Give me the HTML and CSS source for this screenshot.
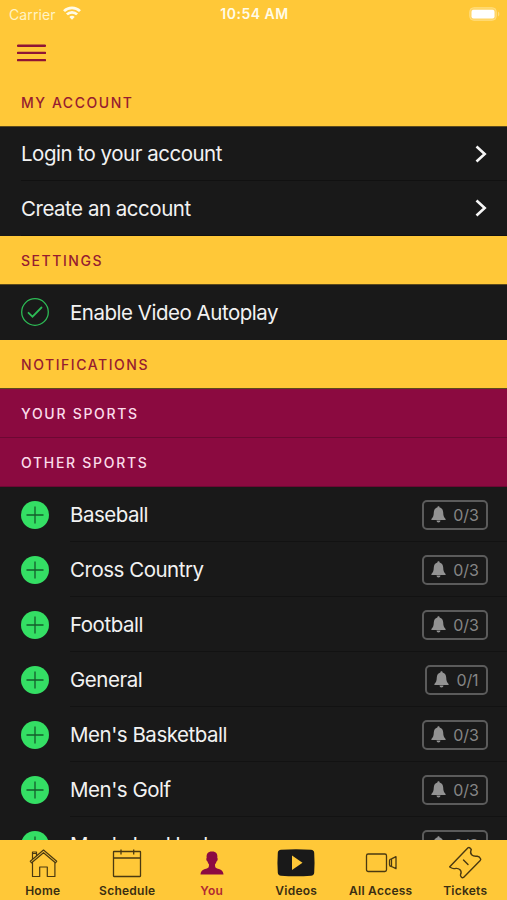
FILE: index.html
```html
<!DOCTYPE html>
<html lang="en">
<head>
<meta charset="utf-8">
<title>You</title>
<link rel="stylesheet" href="styles.css">
</head>
<body>
<svg class="defs" width="0" height="0" aria-hidden="true">
  <symbol id="plus" viewBox="0 0 28 28"><circle cx="14" cy="14" r="14" fill="#34df64"/><path d="M5.500 14h17M14 5.500v17" stroke="#155c2b" stroke-width="1.300"/></symbol>
  <symbol id="bell" viewBox="0 0 15 17"><path d="M7.500.3C6.800.3 6.400.8 6.400 1.500 4 2 2.900 4 2.800 6.600 2.700 10.200 2 11.600.4 13v.9h14.200V13c-1.600-1.400-2.300-2.800-2.400-6.400C12.100 4 11 2 8.600 1.500 8.600.8 8.200.3 7.500.3zM5.500 14.500a2 2 0 0 0 4 0z" fill="#929292"/></symbol>
  <symbol id="chevron" viewBox="0 0 12 18"><path d="M1.500 1.500L9.700 9l-8.200 7.500" fill="none" stroke="#f6f6f6" stroke-width="2.600"/></symbol>
</svg>
<div class="app">
  <header class="status">
    <div class="carrier"><span>Carrier</span>
      <svg width="18" height="14" viewBox="0 0 18 14"><g fill="none" stroke="#fffbe8" stroke-width="2.700"><path d="M1 5.100a11.300 11.300 0 0 1 16 0M3.900 8.400a7.200 7.200 0 0 1 10.200 0"/></g><path d="M9 13.700l-2.700-2.700a3.700 3.700 0 0 1 5.400 0z" fill="#fffbe8"/></svg>
    </div>
    <div class="clock">10:54 AM</div>
    <div class="power"><svg width="31" height="14" viewBox="0 0 31 14"><rect x=".7" y=".7" width="26.600" height="12.600" rx="4" fill="#ffd565" stroke="#ffdc7c"/><rect x="2.500" y="2.700" width="23" height="8.700" rx="2" fill="#fff"/><path d="M29 4.500c1.800.8 1.800 4.200 0 5z" fill="#ffdc7c"/></svg></div>
  </header>
  <nav class="topbar">
    <svg width="29" height="18" viewBox="0 0 29 18"><path d="M1 1.700h27M1 8.900h27M1 16.100h27" stroke="#8f1535" stroke-width="2.400" stroke-linecap="round"/></svg>
  </nav>
  <main class="content">
    <h2 class="head">MY ACCOUNT</h2>
    <div class="row link"><span class="label">Login to your account</span><svg width="12" height="18"><use href="#chevron"/></svg></div>
    <div class="row link last"><span class="label">Create an account</span><svg width="12" height="18"><use href="#chevron"/></svg></div>
    <h2 class="head">SETTINGS</h2>
    <div class="row setting"><svg class="mark" width="28" height="28" viewBox="0 0 28 28" fill="none" stroke="#2dbb55"><circle cx="14" cy="14" r="13.300" stroke-width="1.300"/><path d="M7.500 14.800l4 3.900 9-9.200" stroke-width="1.800" stroke-linecap="round"/></svg><span class="label">Enable Video Autoplay</span></div>
    <h2 class="head">NOTIFICATIONS</h2>
    <h2 class="head wine">YOUR SPORTS</h2>
    <h2 class="head wine">OTHER SPORTS</h2>
    <div class="row sport"><svg class="mark" width="28" height="28"><use href="#plus"/></svg><div class="cell"><span class="label">Baseball</span><span class="badge"><svg width="15" height="17"><use href="#bell"/></svg>0/3</span></div></div>
    <div class="row sport"><svg class="mark" width="28" height="28"><use href="#plus"/></svg><div class="cell"><span class="label">Cross Country</span><span class="badge"><svg width="15" height="17"><use href="#bell"/></svg>0/3</span></div></div>
    <div class="row sport"><svg class="mark" width="28" height="28"><use href="#plus"/></svg><div class="cell"><span class="label">Football</span><span class="badge"><svg width="15" height="17"><use href="#bell"/></svg>0/3</span></div></div>
    <div class="row sport"><svg class="mark" width="28" height="28"><use href="#plus"/></svg><div class="cell"><span class="label">General</span><span class="badge one"><svg width="15" height="17"><use href="#bell"/></svg>0/1</span></div></div>
    <div class="row sport"><svg class="mark" width="28" height="28"><use href="#plus"/></svg><div class="cell"><span class="label">Men's Basketball</span><span class="badge"><svg width="15" height="17"><use href="#bell"/></svg>0/3</span></div></div>
    <div class="row sport"><svg class="mark" width="28" height="28"><use href="#plus"/></svg><div class="cell"><span class="label">Men's Golf</span><span class="badge"><svg width="15" height="17"><use href="#bell"/></svg>0/3</span></div></div>
    <div class="row sport"><svg class="mark" width="28" height="28"><use href="#plus"/></svg><div class="cell"><span class="label">Men's Ice Hockey</span><span class="badge"><svg width="15" height="17"><use href="#bell"/></svg>0/3</span></div></div>
  </main>
  <footer class="tabs">
    <div class="tab"><svg width="40" height="36" viewBox="0 0 40 36" fill="none" stroke="#4a3911" stroke-width="1.200" stroke-linejoin="round"><path d="M7.300 19.300L20.500 8l13.200 11.300-1.300 1.500L20.500 10.700 8.600 20.800zM9.500 17.300V10h4v3.800M10 11.500h3.500M9.500 20.200V34.500h7.200v-9.500h7.600v9.500h7.600V20.300"/></svg><span>Home</span></div>
    <div class="tab"><svg width="40" height="36" viewBox="0 0 40 36" fill="none" stroke="#4a3911" stroke-width="1.300"><rect x="6.500" y="9.500" width="27" height="25" rx=".5"/><path d="M6.500 16h27M14 7.500v5M26.700 7.500v5"/></svg><span>Schedule</span></div>
    <div class="tab active"><svg width="40" height="36" viewBox="0 0 40 36"><path d="M20 9.500c-4.300 0-5.900 2.700-5.300 6.600-.8.200-.5 2.900.8 3.300.4 1.600 1 2.300 1.500 2.800 0 2.300-.2 3.400-1.700 4-3 1.200-6.500 1.700-6.800 6.200h23c-.3-4.500-3.800-5-6.800-6.200-1.500-.6-1.700-1.700-1.700-4 .5-.5 1.100-1.200 1.500-2.800 1.300-.4 1.600-3.100.8-3.300.6-3.900-1-6.600-5.300-6.600z" fill="#8c0a42"/></svg><span>You</span></div>
    <div class="tab"><svg width="40" height="36" viewBox="0 0 40 36"><path d="M5 7.700Q20 6.700 35 7.700q3 .3 3.200 3 .7 10 0 20-.2 2.700-3.200 3-15 1-30 0-3-.3-3.200-3-.7-10 0-20 .2-2.700 3.200-3z" fill="#191919"/><path d="M16 13.500v14.500l10.500-7.200z" fill="#ffc838"/></svg><span>Videos</span></div>
    <div class="tab"><svg width="40" height="36" viewBox="0 0 40 36" fill="none" stroke="#4a3911" stroke-width="1.300" stroke-linejoin="round"><rect x="5.500" y="12" width="20" height="17.500" rx="1.700"/><path d="M35 14.700v12l-4.500-2.200q-2-.2-2-1.700v-4.200q0-1.500 2-1.700zM30.500 17.200v7"/></svg><span>All Access</span></div>
    <div class="tab"><svg width="40" height="36" viewBox="0 0 40 36" fill="none" stroke="#4a3911" stroke-width="1.400" stroke-linejoin="round" stroke-linecap="round"><path d="M5 24.500L23 5.800q1-.9 2 .2l1.300 1.500q-1.600 3.300.3 5.200 2 2 5.600 1.500 2.200.2 3.200 2.300.8 1-.2 2L18.500 35.500q-1.200.8-2-.3-1.400-1.300-1-2.400 1.500-3-.5-5-2-2-5.500-1.200-2 .3-4.300-1.300-.9-.6-.2-.8zM18.500 18l4.500 4.600"/></svg><span>Tickets</span></div>
  </footer>
</div>
</body>
</html>
```
FILE: styles.css
```css
* { box-sizing: border-box; }
body { margin: 0; background: #191919; font-family: Inter, "Liberation Sans", sans-serif; }
.defs { display: block; height: 0; }
.app { width: 507px; height: 900px; display: flex; flex-direction: column; overflow: hidden; background: #191919; }
.status { flex: none; height: 28px; display: grid; grid-template-columns: 1fr auto 1fr; align-items: center; padding: 0 7px 0 9px; background: #ffc838; color: #fffbe8; font-size: 14px; }
.carrier { display: flex; align-items: center; gap: 7px; color: #fff3c4; letter-spacing: .1px; }
.carrier svg { margin-top: -2px; }
.clock { font-weight: 600; font-size: 14px; letter-spacing: .5px; margin-top: -1px; }
.power { display: flex; justify-content: flex-end; }
.power svg { display: block; margin-top: -1px; }
.topbar { flex: none; height: 50px; padding: 16px 16.500px 0; background: #ffc838; }
.topbar svg { display: block; }
.content { flex: 1; min-height: 0; overflow: hidden; }
.head { margin: 0; height: 49px; padding: 0 21px; display: flex; align-items: center; background: #ffc838; border-bottom: 1px solid #5c4a1c; color: #961c30; font-size: 14px; font-weight: 500; letter-spacing: 1.550px; }
.wine { background: #8b0a40; color: #fbdcea; border-bottom-color: #6d0833; letter-spacing: 1.700px; }
.row { display: flex; align-items: center; background: #191919; color: #f2f2f2; font-size: 20.500px; }
.label { letter-spacing: -.48px; white-space: nowrap; }
.link { height: 54px; margin-left: 21px; padding-right: 20px; justify-content: space-between; border-bottom: 1px solid #111; }
.link.last { height: 55px; }
.setting { height: 55px; padding: 0 0 1px 21px; }
.mark { flex: none; margin-right: 21px; }
.sport { height: 55px; padding-left: 21px; }
.cell { flex: 1; height: 55px; display: flex; align-items: center; justify-content: space-between; padding: 1px 19px 0 0; border-bottom: 1px solid #121212; }
.badge { width: 66px; height: 30px; border: 2px solid #5b5b5b; border-radius: 5px; display: flex; align-items: center; justify-content: center; gap: 7px; color: #858585; font-size: 16px; letter-spacing: -.1px; }
.badge.one { width: 63px; }
.tabs { flex: none; height: 60px; display: grid; grid-template-columns: repeat(6, 1fr); background: #ffc838; color: #3a2e12; }
.tab { display: flex; flex-direction: column; align-items: center; gap: 6px; margin: 2px 0 0 1px; font-size: 12px; font-weight: 600; line-height: 14px; letter-spacing: .25px; white-space: nowrap; }
.tab svg { display: block; overflow: visible; }
.active { color: #b02a32; }
```
